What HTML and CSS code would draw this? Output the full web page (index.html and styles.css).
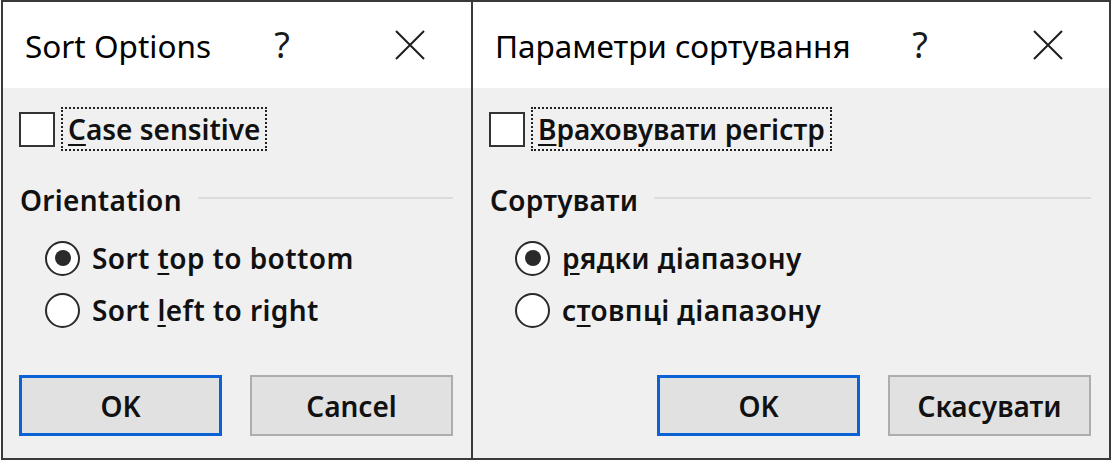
FILE: index.html
```html
<!DOCTYPE html>
<html lang="en">
<head>
    <meta charset="UTF-8">
    <title>Sort Options</title>
    <link rel="stylesheet" href="styles.css">
</head>
<body>
    <div class="screen">
        <div class="dialog dialog-en">
            <div class="titlebar">
                <span class="title">Sort Options</span>
                <span class="tb-btn tb-help">?</span>
                <span class="tb-btn tb-close">
                    <svg width="30" height="30" viewBox="0 0 30 30"><path d="M1 1 L29 29 M29 1 L1 29" stroke="#1e1e1e" stroke-width="2" fill="none"/></svg>
                </span>
            </div>
            <div class="body">
                <div class="check-row">
                    <span class="checkbox"></span>
                    <span class="focus"><u>C</u>ase sensitive</span>
                </div>
                <div class="group-head">
                    <span>Orientation</span>
                    <span class="group-line"></span>
                </div>
                <div class="radio-row">
                    <span class="radio checked"></span>
                    <span>Sort <u>t</u>op to bottom</span>
                </div>
                <div class="radio-row">
                    <span class="radio"></span>
                    <span>Sort <u>l</u>eft to right</span>
                </div>
                <div class="buttons">
                    <span class="btn default">OK</span>
                    <span class="btn">Cancel</span>
                </div>
            </div>
        </div>

        <div class="dialog dialog-uk">
            <div class="titlebar">
                <span class="title">Параметри сортування</span>
                <span class="tb-btn tb-help">?</span>
                <span class="tb-btn tb-close">
                    <svg width="30" height="30" viewBox="0 0 30 30"><path d="M1 1 L29 29 M29 1 L1 29" stroke="#1e1e1e" stroke-width="2" fill="none"/></svg>
                </span>
            </div>
            <div class="body">
                <div class="check-row">
                    <span class="checkbox"></span>
                    <span class="focus"><u>В</u>раховувати регістр</span>
                </div>
                <div class="group-head">
                    <span>Сортувати</span>
                    <span class="group-line"></span>
                </div>
                <div class="radio-row">
                    <span class="radio checked"></span>
                    <span><u>р</u>ядки діапазону</span>
                </div>
                <div class="radio-row">
                    <span class="radio"></span>
                    <span>с<u>т</u>овпці діапазону</span>
                </div>
                <div class="buttons">
                    <span class="btn default">OK</span>
                    <span class="btn">Скасувати</span>
                </div>
            </div>
        </div>
    </div>
</body>
</html>
```

FILE: styles.css
```css
* {
    margin: 0;
    padding: 0;
    box-sizing: border-box;
}

body {
    background: #ffffff;
    font-family: 'Noto Sans', 'Open Sans', sans-serif;
    color: #111;
}

.screen {
    display: flex;
    width: 1110px;
    height: 460px;
    margin: 0 0 0 1px;
    border: 2px solid #3a3a3a;
}

.dialog {
    display: flex;
    flex-direction: column;
    background: #f0f0f0;
}

.dialog-en {
    width: 468px;
}

.dialog-uk {
    flex: 1;
    border-left: 2px solid #3a3a3a;
}

.titlebar {
    height: 86px;
    background: #ffffff;
    display: flex;
    align-items: center;
    padding-left: 22px;
}

.title {
    flex: 1;
    font-size: 31.5px;
    font-weight: 400;
    color: #000;
}

.tb-btn {
    display: flex;
    align-items: center;
    justify-content: center;
    height: 100%;
}

.tb-help {
    width: 134px;
    font-size: 36px;
    font-weight: 400;
    color: #1a1a1a;
    padding-bottom: 2px;
}

.tb-close {
    width: 122px;
}

.body {
    flex: 1;
    padding: 19px 18px 0 16px;
    font-size: 28px;
    font-weight: 600;
    display: flex;
    flex-direction: column;
}

u {
    text-decoration-thickness: 2px;
    text-underline-offset: 4px;
}

.check-row {
    display: flex;
    align-items: center;
    height: 44px;
}

.checkbox {
    width: 36px;
    height: 35px;
    border: 2px solid #333;
    background: #fff;
    margin-right: 6px;
}

.focus {
    height: 44px;
    display: flex;
    align-items: center;
    padding: 0 5px;
    border: 2px dotted #222;
}

.group-head {
    display: flex;
    align-items: center;
    height: 40px;
    margin-top: 29px;
    padding-left: 1px;
    letter-spacing: 0.3px;
}

.group-line {
    flex: 1;
    height: 2px;
    background: #dcdcdc;
    margin-left: 16px;
    margin-top: -4px;
}

.radio-row {
    display: flex;
    align-items: center;
    height: 52px;
    padding-left: 26px;
    letter-spacing: 0.4px;
}

.group-head + .radio-row {
    margin-top: 12px;
}

.radio {
    width: 35px;
    height: 35px;
    border: 2.5px solid #2a2a2a;
    border-radius: 50%;
    background: #fff;
    margin-right: 12px;
    display: flex;
    align-items: center;
    justify-content: center;
}

.radio.checked::after {
    content: "";
    width: 16px;
    height: 16px;
    border-radius: 50%;
    background: #2a2a2a;
}

.buttons {
    display: flex;
    justify-content: flex-end;
    gap: 28px;
    margin-top: 39px;
}

.btn {
    width: 203px;
    height: 61px;
    background: #e1e1e1;
    border: 2px solid #adadad;
    display: flex;
    align-items: center;
    justify-content: center;
}

.btn.default {
    border: 3px solid #0a62d6;
}
```
